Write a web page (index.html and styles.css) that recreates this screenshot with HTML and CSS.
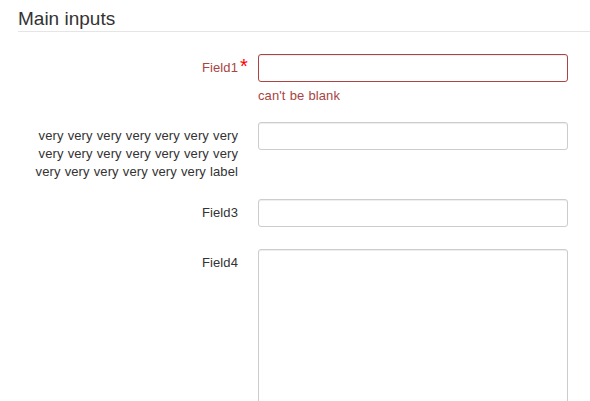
FILE: index.html
```html
<!DOCTYPE html>
<html>
<head>
<meta charset="utf-8">
<link rel="stylesheet" href="styles.css">
</head>
<body>
<div class="page">
  <div class="legend">Main inputs</div>
  <div class="form-group has-error">
    <label class="control-label required">Field1</label>
    <div class="control">
      <input class="form-control" type="text">
      <span class="help-block">can't be blank</span>
    </div>
  </div>
  <div class="form-group">
    <label class="control-label">very very very very very very very very very very very very very very very very very very very very label</label>
    <div class="control">
      <input class="form-control" type="text">
    </div>
  </div>
  <div class="form-group form-group--wide">
    <label class="control-label">Field3</label>
    <div class="control">
      <input class="form-control" type="text">
    </div>
  </div>
  <div class="form-group">
    <label class="control-label">Field4</label>
    <div class="control">
      <textarea class="form-control form-control--area"></textarea>
    </div>
  </div>
</div>
</body>
</html>
```
FILE: styles.css
```css
html, body {
  margin: 0;
  padding: 0;
  background: #fff;
}
body {
  font-family: "Liberation Sans", Arial, sans-serif;
  font-size: 13px;
  line-height: 18px;
  color: #333;
  overflow: hidden;
}
.page {
  padding-left: 18px;
}
.legend {
  font-size: 19px;
  line-height: 24px;
  padding-top: 7px;
  color: #333;
  border-bottom: 1px solid #e5e5e5;
  margin-bottom: 22px;
}
.form-group {
  display: grid;
  grid-template-columns: 220px 310px;
  column-gap: 20px;
  align-items: start;
  margin-bottom: 17px;
}
.form-group--wide {
  margin-bottom: 22px;
}
.control-label {
  position: relative;
  text-align: right;
  padding-top: 5px;
  padding-bottom: 1px;
  letter-spacing: 0.1px;
  word-spacing: 0.4px;
}
.required::after {
  content: "*";
  position: absolute;
  left: 100%;
  top: 3px;
  margin-left: 2px;
  color: #f00;
  font-size: 20px;
  line-height: 18px;
  letter-spacing: 0;
}
.has-error .control-label,
.has-error .help-block {
  color: #a94442;
}
.control {
  display: flex;
  flex-direction: column;
}
.form-control {
  box-sizing: border-box;
  display: block;
  width: 310px;
  height: 28px;
  margin: 0;
  padding: 4px 8px;
  font: inherit;
  border: 1px solid #ccc;
  border-radius: 3px;
  background: #fff;
  box-shadow: inset 0 1px 1px rgba(0, 0, 0, 0.075);
}
.has-error .form-control {
  border-color: #a94442;
}
.form-control--area {
  height: 200px;
  resize: none;
}
.help-block {
  display: block;
  margin-top: 5px;
  letter-spacing: 0.1px;
  word-spacing: 0.4px;
}
```
